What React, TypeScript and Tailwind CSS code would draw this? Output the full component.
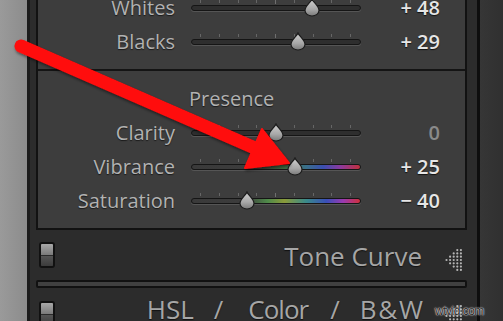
import React from "react";

type SliderProps = { pos: number; track: string };

function Slider({ pos, track }: SliderProps) {
  const ticks = Array.from({ length: 9 }, (_, i) => i);
  return (
    <div className="relative w-[170px] h-[20px] shrink-0">
      <div className="absolute left-[9px] right-[10px] top-[2px] flex justify-between">
        {ticks.map((i) => (
          <div key={i} className={i === 4 ? "w-px h-[4px] bg-[#6f6f6f]" : "w-px h-[3px] bg-[#666]"} />
        ))}
      </div>
      <div className={`absolute left-0 right-0 top-[7px] h-[6px] rounded-full border border-[#151515] shadow-[0_1px_0_#555] ${track}`} />
      <svg
        width="18"
        height="19"
        viewBox="0 0 18 19"
        className="absolute top-0"
        style={{ left: pos - 9 }}
      >
        <defs>
          <linearGradient id="thumbg" x1="0" y1="0" x2="0" y2="1">
            <stop offset="0" stopColor="#d0d0d0" />
            <stop offset="0.6" stopColor="#a8a8a8" />
            <stop offset="1" stopColor="#7a7a7a" />
          </linearGradient>
        </defs>
        <path
          d="M9 1 C10 4 16 8 16 12.5 A7 5.5 0 0 1 2 12.5 C2 8 8 4 9 1 Z"
          fill="url(#thumbg)"
          stroke="#1c1c1c"
          strokeWidth="1.2"
        />
      </svg>
    </div>
  );
}

type RowProps = { label: string; pos: number; value: string; track?: string; dim?: boolean };

function Row({ label, pos, value, track, dim }: RowProps) {
  return (
    <div className="flex items-center h-[34px] shrink-0">
      <div className="w-[137px] text-right text-[20px] leading-[24px] text-[#b2b2b2] [text-shadow:0_1px_1px_#1a1a1a]">
        {label}
      </div>
      <div className="w-[16px]" />
      <Slider pos={pos} track={track ?? "bg-[#2e2e2e]"} />
      <div
        className={
          dim
            ? "w-[79px] text-right text-[20px] leading-[24px] font-semibold text-[#8a8a8a]"
            : "w-[79px] text-right text-[20px] leading-[24px] font-semibold text-[#e6e6e6] [text-shadow:0_1px_1px_#111]"
        }
      >
        {value}
      </div>
    </div>
  );
}

function Toggle() {
  return (
    <div className="w-[16px] h-[26px] border-2 border-[#111] rounded-[3px] flex flex-col overflow-hidden shrink-0">
      <div className="h-[11px] bg-[linear-gradient(180deg,#a8a8a8,#7a7a7a)]" />
      <div className="h-px bg-[#2a2a2a]" />
      <div className="flex-1 bg-[linear-gradient(180deg,#555,#3c3c3c)]" />
    </div>
  );
}

function DotTriangle() {
  const dots: { x: number; y: number }[] = [];
  const cols = [1, 3, 5, 7, 7];
  cols.forEach((n, c) => {
    for (let r = 0; r < n; r++) {
      dots.push({ x: 1.5 + c * 3.6, y: 11 - ((n - 1) * 3.3) / 2 + r * 3.3 });
    }
  });
  return (
    <svg width="18" height="22" viewBox="0 0 18 22" className="shrink-0">
      {dots.map((d, i) => (
        <circle key={i} cx={d.x} cy={d.y} r="1.1" fill="#b5b5b5" />
      ))}
    </svg>
  );
}

export default function App() {
  return (
    <div className="relative w-[503px] h-[321px] overflow-hidden flex font-['Open_Sans',sans-serif] bg-[#2b2b2b]">
      <div className="w-[27px] shrink-0 bg-[linear-gradient(90deg,#9a9a9a,#8c8c8c)]" />
      <div className="w-[3px] shrink-0 bg-[#1b1b1b]" />
      <div className="w-[447px] shrink-0 bg-[#2c2c2c] pl-[6px] pr-[10px] flex flex-col">
        {/* Basic panel box */}
        <div className="shrink-0 bg-[#3d3d3d] border-x-2 border-b-2 border-[#121212] flex flex-col">
          <div className="mt-[-9px] pb-[10px] shrink-0">
            <Row label="Whites" pos={121} value="+ 48" />
            <Row label="Blacks" pos={107} value="+ 29" />
          </div>
          <div className="h-[2px] shrink-0 bg-[#141414]" />
          <div className="shrink-0 pt-[16px] pb-[6px] pl-[151px] text-[20px] leading-[23px] text-[#b2b2b2] [text-shadow:0_1px_1px_#1a1a1a]">
            Presence
          </div>
          <Row label="Clarity" pos={85} value="0" dim />
          <Row
            label="Vibrance"
            pos={104}
            value="+ 25"
            track="bg-[linear-gradient(90deg,#3a3a3a_0%,#3c3c3c_38%,#3f6a3f_55%,#3a6f8a_68%,#3a4fb0_78%,#8a3aa0_88%,#c2303c_100%)]"
          />
          <Row
            label="Saturation"
            pos={56}
            value="− 40"
            track="bg-[linear-gradient(90deg,#3a3a3a_0%,#3c3c3c_32%,#4f8a4a_45%,#8a9a3a_55%,#3a8a8a_68%,#3a4fb8_80%,#9a3ab0_90%,#d0303c_100%)]"
          />
          <div className="h-[10px] shrink-0" />
        </div>
        {/* Tone Curve header */}
        <div className="h-[50px] shrink-0 flex items-start pl-[3px]">
          <div className="mt-[12px]">
            <Toggle />
          </div>
          <div className="flex-1 mt-[11px] text-right text-[26px] leading-[30px] text-[#a6a6a6] [text-shadow:0_1px_1px_#111]">
            Tone Curve
          </div>
          <div className="ml-[23px] mr-[4px] mt-[19px]">
            <DotTriangle />
          </div>
        </div>
        {/* collapsed bar */}
        <div className="h-[8px] shrink-0 rounded-[2px] border-2 border-[#111] bg-[#404040]" />
        {/* HSL row */}
        <div className="h-[48px] shrink-0 flex items-start pl-[3px]">
          <div className="mt-[13px]">
            <Toggle />
          </div>
          <div className="flex-1 mt-[6px] flex justify-end items-start text-[26px] leading-[30px] text-[#a6a6a6] [text-shadow:0_1px_1px_#111] whitespace-nowrap">
            <span>HSL</span>
            <span className="ml-[20px]">/</span>
            <span className="ml-[25px] tracking-[-1px]">Color</span>
            <span className="ml-[22px]">/</span>
            <span className="ml-[20px] tracking-[-1px] [word-spacing:-3px]">B &amp; W</span>
          </div>
          <div className="ml-[23px] mr-[4px] mt-[17px]">
            <DotTriangle />
          </div>
        </div>
      </div>
      <div className="w-[3px] shrink-0 bg-[#0e0e0e]" />
      <div className="flex-1 bg-[linear-gradient(90deg,#363636,#303030)]" />

      {/* watermark */}
      <div className="absolute left-[435px] top-[303px] text-[12px] leading-[16px] tracking-[-0.5px] text-[#2a2a2a] font-['Liberation_Sans',sans-serif] [text-shadow:0_0_2px_#fff,0_0_1px_#fff]">
        wtvid.com
      </div>

      {/* red arrow */}
      <svg
        className="absolute left-0 top-0 pointer-events-none"
        width="503"
        height="321"
        viewBox="0 0 503 321"
      >
        <defs>
          <filter id="sh" x="-10%" y="-10%" width="120%" height="130%">
            <feDropShadow dx="1" dy="2" stdDeviation="1.5" floodColor="#000" floodOpacity="0.5" />
          </filter>
        </defs>
        <g filter="url(#sh)">
          <line x1="21" y1="46" x2="256" y2="148.5" stroke="#ff0a0a" strokeWidth="13" strokeLinecap="round" />
          <polygon points="289,163 245,168 262,129" fill="#ff0a0a" stroke="#ff0a0a" strokeWidth="2" strokeLinejoin="round" />
        </g>
      </svg>
    </div>
  );
}
